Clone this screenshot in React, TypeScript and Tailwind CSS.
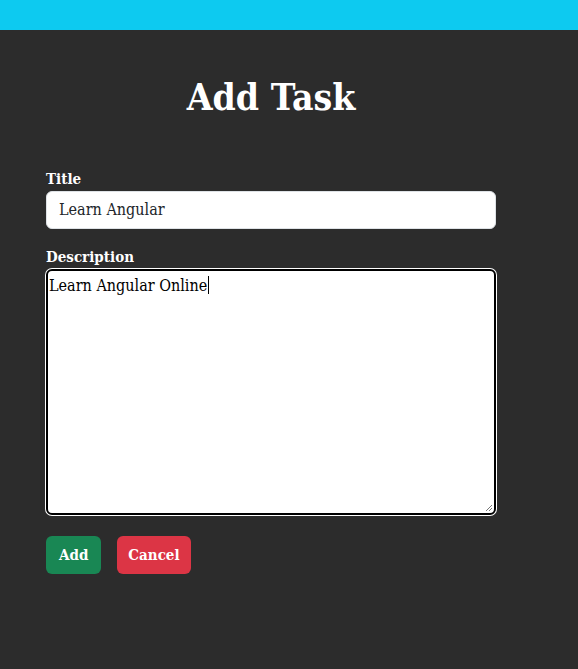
import React from "react";

const serif = "font-['DejaVu_Serif_Condensed','DejaVu_Serif',serif]";

function ResizeGrip() {
  return (
    <svg width="10" height="10" viewBox="0 0 10 10" className="absolute bottom-[1px] right-[1px]" aria-hidden>
      <path d="M9 3L3 9M9 6L6 9" stroke="#777" strokeWidth="1" />
    </svg>
  );
}

export default function App() {
  return (
    <div className={`min-h-[669px] w-full bg-[#2c2c2c] ${serif}`}>
      <div className="h-[30px] bg-[#0dcaf0]" />

      <div className="ml-[46px] w-[450px] pt-[43px]">
        <h1 className="text-center text-[37px] font-bold leading-[48px] text-white">Add Task</h1>

        <form className="mt-[46px] flex flex-col" onSubmit={(e) => e.preventDefault()}>
          <label className="text-[15px] font-bold leading-[24px] text-white">Title</label>
          <div className="flex h-[38px] items-center rounded-md border border-[#dee2e6] bg-white px-3 text-[16px] text-[#212529]">
            Learn Angular
          </div>

          <label className="mt-4 text-[15px] font-bold leading-[24px] text-white">Description</label>
          <div className="relative h-[246px] rounded-md border-2 border-black bg-white px-px pt-[2px] text-[16px] leading-[24px] text-black ring-1 ring-white">
            <span>Learn Angular Online</span>
            <span className="ml-px inline-block h-[18px] w-px translate-y-[3px] bg-black" />
            <ResizeGrip />
          </div>

          <div className="mt-[21px] flex gap-4">
            <button
              type="submit"
              className="h-[38px] rounded-md bg-[#198754] px-[13px] text-[15px] font-bold text-white"
            >
              Add
            </button>
            <button type="button" className="h-[38px] rounded-md bg-[#dc3545] px-[11px] text-[15px] font-bold text-white">
              Cancel
            </button>
          </div>
        </form>
      </div>
    </div>
  );
}
